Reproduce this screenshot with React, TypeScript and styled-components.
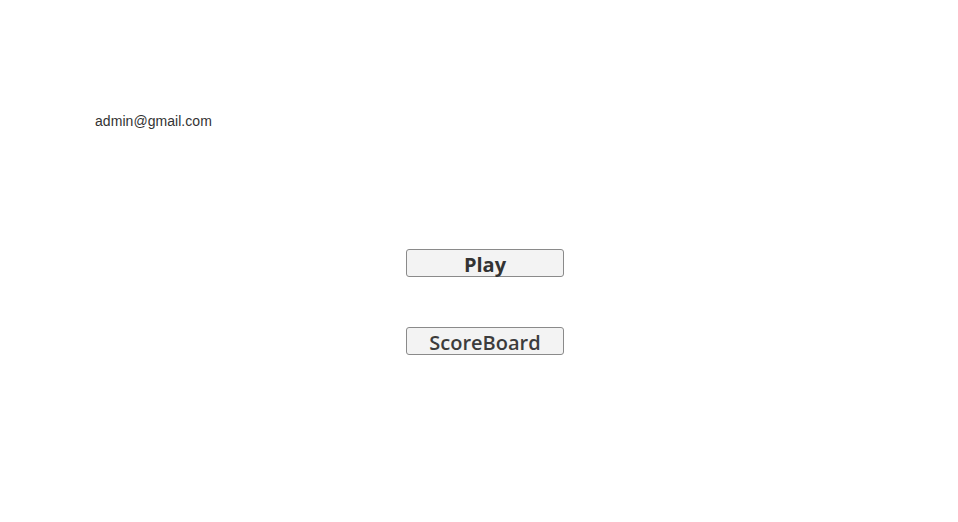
import React from "react";
import styled, { createGlobalStyle } from "styled-components";

const Global = createGlobalStyle`
  html, body { margin: 0; padding: 0; background: #fff; }
  body { font-family: "Liberation Sans", Arial, sans-serif; }
`;

const Page = styled.div`
  width: 958px;
  height: 522px;
  display: flex;
  flex-direction: column;
`;

const Header = styled.header`
  padding: 112px 0 0 95px;
  height: 17px;
`;

const Email = styled.span`
  font-size: 14px;
  line-height: 16px;
  letter-spacing: 0.05px;
  color: #333;
`;

const Menu = styled.nav`
  margin-top: 120px;
  padding-left: 12px;
  display: flex;
  flex-direction: column;
  align-items: center;
  gap: 50px;
`;

const MenuButton = styled.button<{ $weight: number; $color: string }>`
  width: 158px;
  height: 28px;
  box-sizing: border-box;
  border: 1px solid #8a8a8a;
  border-radius: 3px;
  background: #f3f3f3;
  color: ${(p) => p.$color};
  font-family: "Open Sans", sans-serif;
  font-size: 20px;
  font-weight: ${(p) => p.$weight};
  line-height: 26px;
  padding: 2px 0 0;
  cursor: pointer;
`;

export default function App() {
  return (
    <>
      <Global />
      <Page>
        <Header>
          <Email>admin@gmail.com</Email>
        </Header>
        <Menu>
          <MenuButton $weight={700} $color="#333">Play</MenuButton>
          <MenuButton $weight={600} $color="#3c3c3c">ScoreBoard</MenuButton>
        </Menu>
      </Page>
    </>
  );
}
